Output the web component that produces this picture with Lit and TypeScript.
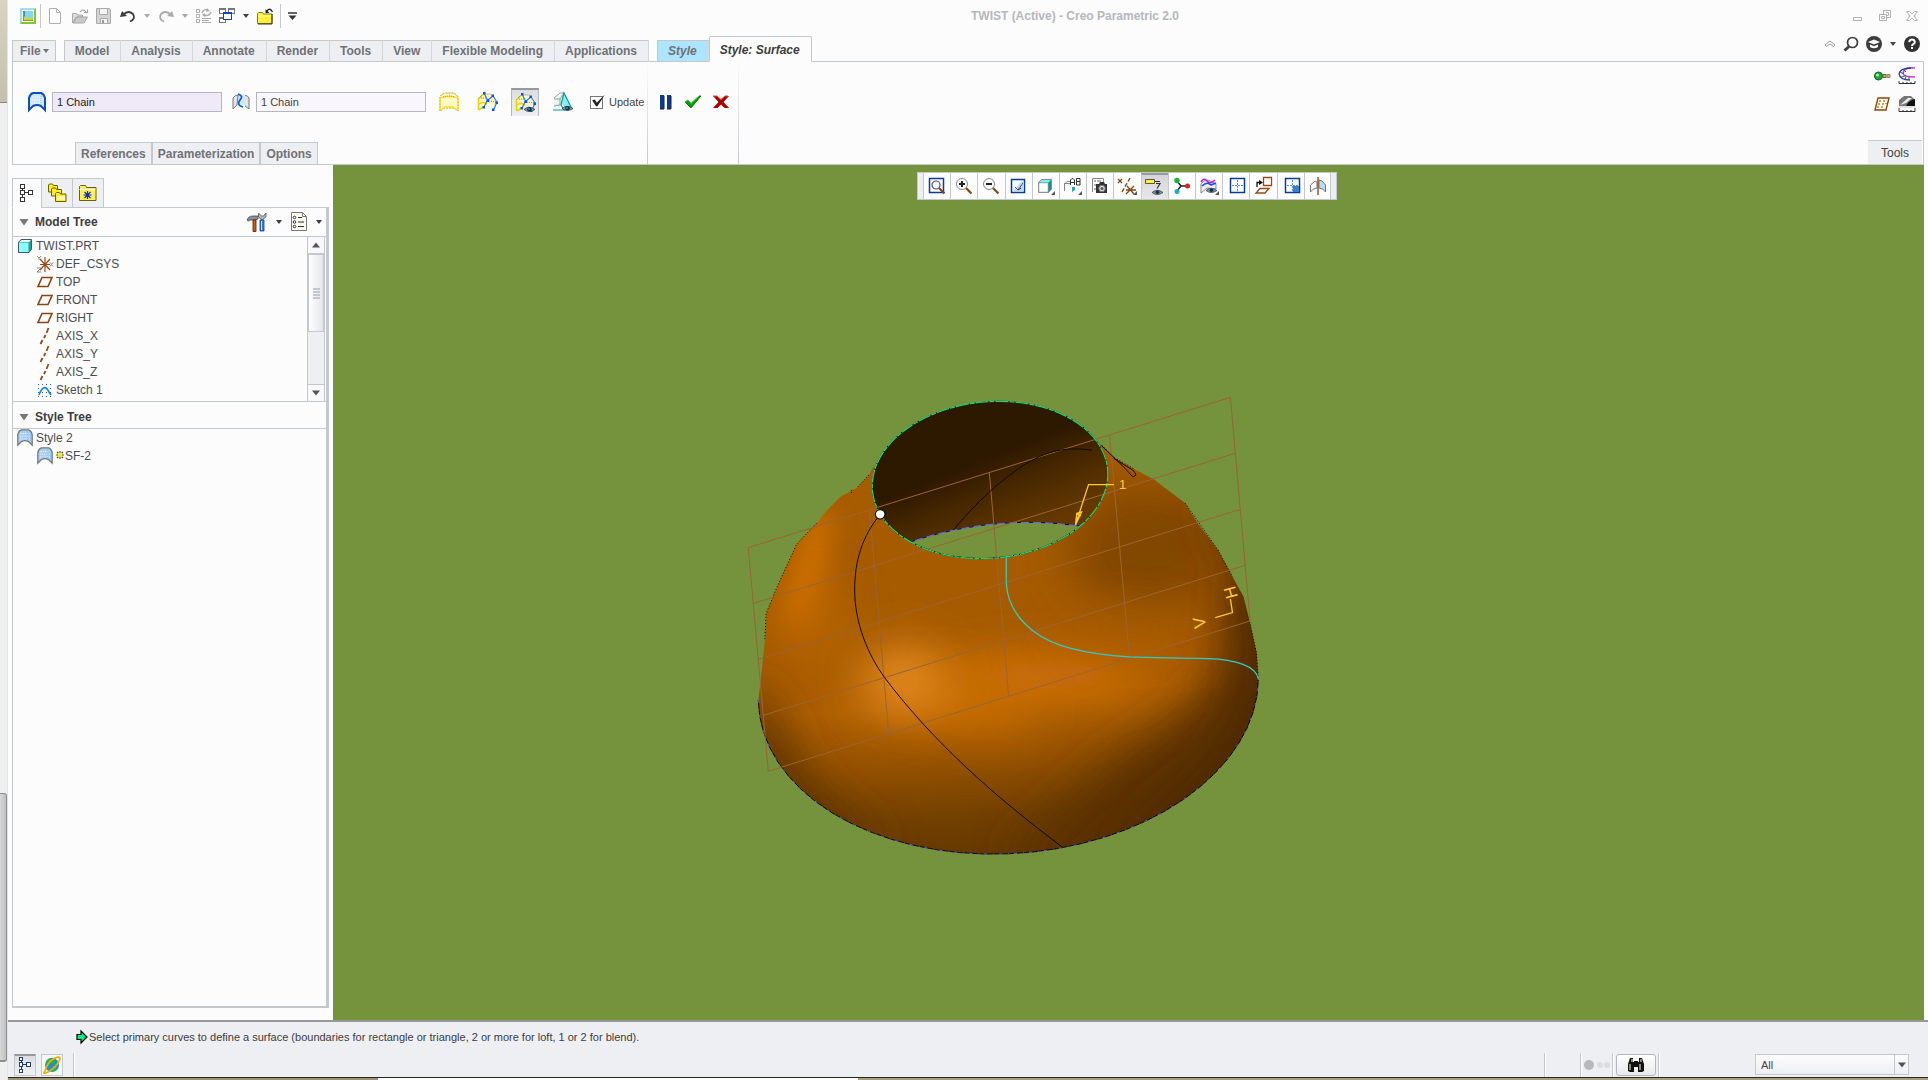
import { LitElement, html, svg, css, nothing, type SVGTemplateResult } from "lit";
import { customElement, property, state } from "lit/decorators.js";
import { classMap } from "lit/directives/class-map.js";

interface Glyph {
  w: number;
  h: number;
  art: SVGTemplateResult;
}

const surfaceArt = (line: string, fill: string) => svg`
  <path d="M2 18V6Q3 2 6 1H14Q17 2 18 6V18L14 14Q10 12 6 14Z" fill=${fill} stroke=${line} stroke-width="1.4"/>
  <path d="M5 5h10M4.500 8h11M4.500 11h11" stroke="#fff" stroke-dasharray="1 1.500" fill="none"/>
  <path d="M13 3v9M16 6v8" stroke="#7fb2e0" stroke-dasharray="1 1" fill="none"/>`;

const eyeArt = svg`
  <path d="M9 16.500Q14 12 20 16.500Q14 20.500 9 16.500Z" fill="#8a8f94" stroke="#444" stroke-width=".8"/>
  <circle cx="14.500" cy="16.300" r="2.200" fill="#036"/><circle cx="14" cy="16" r="1" fill="#1aa08a"/>`;

const meshArt = svg`
  <path d="M1 18V7L6 2H15L19 6V13L16 16L13 11L7 14Z" fill="#fbf6bd"/>
  <path d="M1.500 18V7L6 2.500M2 12Q6 9 10 12M2 18L6 15" stroke="#e6d800" stroke-width="1.600" fill="none"/>
  <path d="M1.500 6.500L6 2H14L18 6M4 6H9M12 9L19 10" stroke="#8a8440" stroke-dasharray="1 1" fill="none"/>
  <path d="M7.500 2L10.500 8L7 15M16 4L20 10L17 17M11 8L16 4" stroke="#2a70f0" stroke-width="1.100" fill="none"/>
  <path d="M6 0h2.500v2.500h-2.500zM9.500 7.500h2.500v2.500h-2.500zM5.500 14h2.500v2.500h-2.500zM14.500 2.500h2.500v2.500h-2.500zM18.500 9.500h2.500v2.500h-2.500zM15 16.500h2.500v2.500h-2.500z" fill="#0a50ff"/>`;

const treeArt = (line: string) => svg`
  <g fill="#fff" stroke=${line} shape-rendering="crispEdges">
    <path d="M3.500 5v10M3.500 9.500h6" fill="none"/>
    <rect x="1.500" y="1.500" width="4" height="4"/><rect x="1.500" y="7.500" width="4" height="4"/>
    <rect x="1.500" y="14.500" width="4" height="4"/><rect x="9.500" y="7.500" width="4" height="4"/>
  </g>`;

const icons: Record<string, Glyph> = {
  app: { w: 16, h: 16, art: svg`
    <rect width="16" height="16" rx="1" fill="#a8d8ee"/><path d="M16 0V16H0Z" fill="#7ec636"/>
    <path d="M2 2h12v12h-12z" fill="#fff"/><path d="M3 3h10v10h-10z" fill="#2a9aa8"/><path d="M4 3v9h9v1h-10v-10z" fill="#8a9a10"/>
    <path d="M5 3h8v7h-8z" fill="#8ad4e8"/><path d="M4 8l2 2h7v2h-9z" fill="#c6d83a"/>` },
  newFile: { w: 16, h: 16, art: svg`<path d="M1.500.5h7l4 4v11h-11zM8.500.5v4h4" fill="#fff" stroke="#b0b0b0"/>` },
  open: { w: 16, h: 16, art: svg`
    <path d="M.5 15V5.500h4l1 1.500h5v2h-6.500z" fill="#ddd" stroke="#aaa"/><path d="M1 15L5 9h10.500L12 15z" fill="#c9c9c9" stroke="#a5a5a5"/>
    <path d="M8 4Q11 0 14 4M12 4.500h3.500v-3" fill="none" stroke="#a0a0a0" stroke-width="1.200"/>` },
  save: { w: 16, h: 16, art: svg`
    <path d="M.5.5h13l1 1v14h-14z" fill="#d4d4d4" stroke="#aaa"/><path d="M3.500.5h8v6h-8zM4.500 10.500h7v5h-7z" fill="#f4f4f4" stroke="#aaa"/><path d="M6 12h2v3h-2z" fill="#999"/>` },
  undo: { w: 16, h: 16, art: svg`
    <path d="M3 7Q8 1.500 13 6Q16 11 10 13.500" fill="none" stroke="#3c3c3c" stroke-width="1.800"/><path d="M0 9L2 3L7 8Z" fill="#3c3c3c"/>` },
  redo: { w: 16, h: 16, art: svg`
    <path d="M13 7Q8 1.500 3 6Q0 11 6 13.500" fill="none" stroke="#aaa" stroke-width="1.800"/><path d="M16 9L14 3L9 8Z" fill="#aaa"/>` },
  regen: { w: 16, h: 16, art: svg`
    <g fill="none" stroke="#aaa"><path d="M.5 1.500h3v3h-3zM.5 6.500h3v3h-3zM.5 11.500h3v3h-3zM6 10.500h9M6 12.500h7M6 14.500h9"/>
    <path d="M6 5Q8 0 12 2.500M15 4Q13 9 8 7" stroke-width="1.400"/></g><path d="M11 0l3 3-4 1zM9 5v4l-3-2z" fill="#aaa"/>` },
  windows: { w: 16, h: 16, art: svg`
    <g shape-rendering="crispEdges" fill="#fff"><path d="M.5.5h6v5h-6zM9.500.5h6v5h-6zM.5 9.500h6v5h-6z" stroke="#777"/><path d="M0 0h7v2h-7zM9 0h7v2h-7zM0 9h4v2h-4z" fill="#777"/>
    <path d="M4.500 4.500h8v7h-8z" stroke="#0a48c0"/><path d="M4 4h9v2h-9z" fill="#0a48c0"/></g>` },
  folder: { w: 16, h: 16, art: svg`
    <path d="M.5 15.500v-10l1-1h4l1 1.500h8.500v9.500z" fill="#ffee3a" stroke="#8a8000"/><path d="M1 8h13.500" stroke="#fffbb0"/><path d="M15 6v10h-14" fill="none" stroke="#333"/>
    <path d="M10 3Q13-1 15.500 4" fill="none" stroke="#222" stroke-width="1.300"/><path d="M8.500 1v4h4z" fill="#222"/>` },
  caret: { w: 8, h: 6, art: svg`<path d="M1 1h6L4 5Z" fill="currentColor"/>` },
  custom: { w: 10, h: 9, art: svg`<path d="M0 1h9" stroke="#333" stroke-width="1.500"/><path d="M.5 3.500h8L4.500 8Z" fill="#333"/>` },
  minimize: { w: 12, h: 12, art: svg`<path d="M1.500 7.500h8v3h-8z" fill="none" stroke="#b0b0b0"/>` },
  restore: { w: 12, h: 12, art: svg`<path d="M.5 4.500h7v6h-7zM2.500 6.500h3v2h-3zM4.500 4v-3.500h7v7h-4M7 2.500h2.500v3h-2" fill="none" stroke="#b0b0b0"/>` },
  close: { w: 12, h: 12, art: svg`<path d="M.5 1.500h3L6 4l2.500-2.500h3L8 6l3.500 4.500h-3L6 8l-2.500 2.500h-3L4 6Z" fill="none" stroke="#b0b0b0"/>` },
  collapse: { w: 12, h: 8, art: svg`<path d="M1 5L6 1L11 5L9.500 6.500L6 4L2.500 6.500Z" fill="none" stroke="#999"/>` },
  search: { w: 16, h: 16, art: svg`<circle cx="9.500" cy="6.500" r="5" fill="#fff" stroke="#3c3c3c" stroke-width="1.700"/><path d="M6 10.500L1.500 14.500" stroke="#3c3c3c" stroke-width="2.800"/>` },
  learn: { w: 16, h: 16, art: svg`<circle cx="8" cy="8" r="8" fill="#3c3c3c"/><path d="M2 6L8 3.500L14 6L8 8.500Z" fill="#fff"/><path d="M4 8.500V11Q8 13.500 12 11V8.500L8 10.200Z" fill="#fff"/>` },
  help: { w: 16, h: 16, art: svg`<circle cx="8" cy="8" r="8" fill="#333"/><path d="M5.200 6.200Q5.500 3.500 8 3.500T10.800 6Q10.800 7.300 9.300 8.100Q8 8.800 8 10" fill="none" stroke="#fff" stroke-width="2"/><rect x="7" y="11" width="2" height="2" fill="#fff"/>` },
  primary: { w: 20, h: 20, art: svg`<path d="M2 18V6Q3 2 6 1H14Q17 2 18 6V18L14 14Q10 12 6 14Z" fill="#cfe6fb" stroke="#0a50b8" stroke-width="2"/><path d="M5 5h10M4.500 8h11M4.500 11h11" stroke="#fff" stroke-dasharray="1 1.500"/><path d="M14 4v9" stroke="#8fbce8" stroke-dasharray="1 1"/>` },
  surface: { w: 18, h: 18, art: svg`<g transform="scale(.9)">${surfaceArt("#777", "#a9d0f2")}</g>` },
  cross: { w: 20, h: 20, art: svg`
    <path d="M2 17V6Q4 3 8 3H14Q17 3 18 6V17L14 14Q10 11 6 13Z" fill="#cfe6fb"/><path d="M2 17V6Q4 3 7 3L6 13ZM14 3Q17 4 18 6V17L14 14" fill="#e4e4e4" stroke="#777"/>
    <path d="M7 2Q13 4 9 8Q5 13 12 15" fill="none" stroke="#0a60d8" stroke-width="1.800"/>` },
  dome: { w: 20, h: 20, art: svg`
    <path d="M1 19V5Q3 1 7 1H13Q17 1 19 5V19L15 16H5Z" fill="#fdfac8" stroke="#a8a000" stroke-dasharray="2 1"/><path d="M1 19V6Q10 3 19 6V19M2 18L6 15H14L18 18" fill="none" stroke="#f0e020" stroke-width="1.300"/><path d="M4 5Q10 3 16 5" stroke="#888" stroke-dasharray="1 1" fill="none"/>` },
  mesh: { w: 21, h: 20, art: meshArt },
  meshEye: { w: 21, h: 20, art: svg`${meshArt}${eyeArt}` },
  draft: { w: 20, h: 20, art: svg`
    <path d="M1 18V8L8 2H12L9 14Z" fill="#e4f6f0"/><path d="M11 1L19 17L13 18L9 12Z" fill="#8ceced"/><path d="M1 6L7 1H11L7 7H1M7 7V13L1 14" fill="none" stroke="#999"/>
    <path d="M0 18H11L8 13L11 1L19 17" fill="none" stroke="#00a0a0" stroke-width="1.200"/>${eyeArt}` },
  pause: { w: 14, h: 14, art: svg`<path d="M1 0h4v14h-4zM8 0h4v14h-4z" fill="#0a3c96"/><path d="M5 1v13h-4M12 1v13h-4" fill="none" stroke="#222"/>` },
  ok: { w: 18, h: 14, art: svg`<path d="M1 7L4 5L7 8.500L15 1H17L7 13Z" fill="#00a000" stroke="#055a05" stroke-width=".8"/><path d="M1 7L4 5L7 8.500L15 1" fill="none" stroke="#4ad84a"/>` },
  cancel: { w: 16, h: 14, art: svg`<path d="M0 1h4L8 4.500L12 1h4L10.500 7L16 13H11.500L8 9.500L4.500 13H0L5.500 7Z" fill="#a80000"/><path d="M0 1h4L8 4.500L12 1h3" fill="none" stroke="#e04a4a"/>` },
  probe: { w: 18, h: 18, art: svg`<circle cx="5.500" cy="9" r="4" fill="#18a838" stroke="#0a6020"/><circle cx="4.500" cy="8" r="1.500" fill="#b0f0b0"/><path d="M10 7.500h3v3h-3z" fill="#f0d800" stroke="#555"/><path d="M14 7.500h3v3h-3z" fill="#f09a9a" stroke="#886"/>` },
  curvature: { w: 18, h: 18, art: svg`
    <path d="M17 1Q6 0 5 6Q5 10 17 10" fill="none" stroke="#d838d8" stroke-width="1.600"/><path d="M13 1Q2 1 1 7Q2 13 12 13" fill="none" stroke="#1a3cc0" stroke-width="1.400"/>
    <path d="M2 5l4 2M5 2l3 3M3 10l4-1M7 13l1-4M11 13v-3" stroke="#555"/><path d="M1 14v2.500h16v-2.500M5 15v2M9 15v2M13 15v2" fill="none" stroke="#333"/>` },
  gridPlane: { w: 18, h: 18, art: svg`<path d="M5 3H16L13 15H2Z" fill="#fffbe0" stroke="#8a4513" stroke-width="1.400"/><path d="M7 5v2M11 5v2M6 8v2M10 8v2M13 8v1M5 11v2M9 11v2" stroke="#8a4513"/>` },
  shade: { w: 18, h: 18, art: svg`<path d="M1 11V5L6 1H13L17 5V11Z" fill="#777"/><path d="M2 10L10 3H14L8 8Z" fill="#eee"/><path d="M8 11Q11 5 17 4V11Z" fill="#111"/><path d="M1 12h16" stroke="#ccc"/><path d="M1 13v3.500h16v-3.500M5 15v2M9 15v2M13 15v2" fill="none" stroke="#333"/>` },
  tree: { w: 16, h: 20, art: treeArt("#333") },
  treeBlue: { w: 16, h: 20, art: svg`<g transform="translate(1 1) scale(.9)">${treeArt("#0a2a6a")}</g>` },
  folders: { w: 20, h: 20, art: svg`
    <g fill="#ffe92e" stroke="#6b6300"><path d="M1.500 9v-7l1-1h3l1 1.500h4v6.500z"/><path d="M4.500 13v-7l1-1h3l1 1.500h5v6.500z"/><path d="M8.500 18.500v-8l1-1h3l1 1.500h5.500v7.500z"/></g><path d="M10 13h8v4h-8z" fill="#fff9a8"/>` },
  favourites: { w: 20, h: 18, art: svg`
    <path d="M1.500 16.500v-14l1-1h5l1 2h9.500v13z" fill="#ffef58" stroke="#6b6300"/><path d="M1.500 5.500h16" stroke="#fff" /><path d="M9.500 7v8M5.500 11h8M6.500 8l6 6M12.500 8l-6 6" stroke="#0a30c0" stroke-width="1.200"/>` },
  tools: { w: 20, h: 20, art: svg`
    <path d="M0 8L1.500 5.500Q3 4 6 4H11V7L8 8H3L1.500 9Z" fill="#8a9096" stroke="#444" stroke-width=".8"/><path d="M6 8h3v11.500h-3z" fill="#c86010" stroke="#602000" stroke-width=".8"/><path d="M11.500 1v4l3.500 3 4-3V1L16.500 4H14.500Z" fill="#b4b8bc" stroke="#555" stroke-width=".8"/><path d="M13 8h4v11h-4z" fill="#3a80e0" stroke="#124080" stroke-width=".8"/><path d="M14.500 9v9" stroke="#b8dcff"/>` },
  settings: { w: 16, h: 20, art: svg`<path d="M.5.5h11l4 4v14h-15zM11.500.5v4h4" fill="#fffdf0" stroke="#777"/><path d="M7 5.500h4M7 10h6M7 14.500h6" stroke="#333"/><g fill="#fff" stroke="#333"><circle cx="3.500" cy="5.500" r="1.300"/><circle cx="3.500" cy="10" r="1.300"/><circle cx="3.500" cy="14.500" r="1.300"/></g>` },
  part: { w: 14, h: 14, art: svg`<path d="M.5 3.500L3 .5H13.500V10L11 13.500H.5Z" fill="#2f9a9a" stroke="#456"/><path d="M1 3.500h9.500v9.500h-9.500z" fill="#8ff"/><path d="M1.500 3L3.500 1H13L11 3Z" fill="#e8ffff"/>` },
  csys: { w: 16, h: 16, art: svg`<path d="M8 1v15M3 3l10 11M3 14L13 3M3 8.500h10" stroke="#9a4a14" stroke-width="1.200"/><path d="M0 0l2 2 2-2M2 2v2M13 6.500l3 4M16 6.500l-3 4M0 12h4l-4 4h4" stroke="#888" fill="none"/>` },
  plane: { w: 16, h: 12, art: svg`<path d="M5 1.500H15L11 10.500H1Z" fill="none" stroke="#8a4513" stroke-width="1.600"/>` },
  axis: { w: 16, h: 16, art: svg`<path d="M11.500 0L9.500 5M8.500 7L7 10M5.500 12L3.500 16" stroke="#9a4a14" stroke-width="1.800"/>` },
  sketch: { w: 16, h: 14, art: svg`<path d="M1.500 1v13M5.500 1v13M9.500 1v13M13.500 1v13" stroke="#2a50a0" stroke-dasharray="1 3"/><path d="M2 12Q7-1 12 9L14 12" fill="none" stroke="#0a80f8" stroke-width="1.600"/>` },
  spark: { w: 9, h: 10, art: svg`<path d="M4 0v8M0 4h8M1 1l6 6M7 1L1 7" stroke="#444" stroke-width="1.100"/><path d="M2 2h4v4h-4z" fill="#fe0"/>` },
  twisty: { w: 10, h: 8, art: svg`<path d="M.5 1h9L5 7.500Z" fill="#777"/>` },
  refit: { w: 18, h: 18, art: svg`<path d="M1.500 1.500h14v14h-14z" fill="#fff" stroke="#0a3c96" stroke-width="1.500"/><circle cx="8" cy="8" r="4" fill="#eef6fa" stroke="#555" stroke-width="1.200"/><path d="M11 11l5.500 5.500" stroke="#8a4513" stroke-width="2.200"/>` },
  zoomIn: { w: 18, h: 18, art: svg`<circle cx="7" cy="7" r="5.500" fill="#fff" stroke="#888"/><path d="M4 7h6M7 4v6" stroke="#222" stroke-width="2"/><path d="M11 11l5.500 5.500" stroke="#8a4513" stroke-width="2.200"/>` },
  zoomOut: { w: 18, h: 18, art: svg`<circle cx="7" cy="7" r="5.500" fill="#fff" stroke="#888"/><path d="M4 7h6" stroke="#222" stroke-width="2"/><path d="M11 11l5.500 5.500" stroke="#8a4513" stroke-width="2.200"/>` },
  repaint: { w: 18, h: 18, art: svg`<path d="M1.500 2.500h13v13h-13z" fill="#f4faff" stroke="#0a3c96" stroke-width="1.500"/><path d="M3 14L12 4L14 6V14Z" fill="#b8d8f4"/><path d="M5 10l3 3 5-7" fill="none" stroke="#555"/><path d="M8 13l3-2" stroke="#222"/>` },
  shading: { w: 18, h: 18, art: svg`<path d="M1.500 5.500L4.500 2.500H14.500V12L11.500 15.500H1.500Z" fill="#1f8f8f" stroke="#888"/><path d="M2 6h9v9h-9z" fill="#fff" stroke="#aaa" stroke-width=".6"/><path d="M2 5.500L4.500 3H14L11.500 5.500Z" fill="#7ff4f4"/><path d="M18 18h-4l4-4z" fill="#555"/>` },
  views: { w: 18, h: 18, art: svg`<path d="M.5 14V7L3 4.500H6M0 6.500h6" fill="none" stroke="#888"/><path d="M8 10h3v3l-3 2z" fill="#2aa"/><path d="M6.500 8V3L8 1.500h1L10.500 3V8M6.500 5.500h4M12.500 8V1.500h3.500v6.500zM12.500 4.500h3.500" fill="none" stroke="#333"/><path d="M18 18h-4l4-4z" fill="#555"/>` },
  camera: { w: 18, h: 18, art: svg`<path d="M1.500 15V1.500h11V5" fill="#fff" stroke="#888"/><path d="M3 4h2M3 8h2M3 12h2M6 4h4" stroke="#666"/><path d="M5 7h3l1-2h4l1 2h2v9h-11z" fill="#333"/><circle cx="11" cy="11.500" r="3.200" fill="#ddd" stroke="#777"/><circle cx="11" cy="11.500" r="1.500" fill="#555"/>` },
  datums: { w: 20, h: 18, art: svg`<path d="M1 2l4 4M5 2L1 6M9 13h10M10 9l7 8M17 9l-8 8" fill="none" stroke="#8a4513" stroke-width="1.300"/><path d="M13 1L5 15" stroke="#8a4513" stroke-width="1.400" stroke-dasharray="4 2"/><path d="M20 18h-4l4-4z" fill="#555"/>` },
  notes: { w: 20, h: 18, art: svg`<path d="M.5 1.500h9v4h-9z" fill="#fff62a" stroke="#555"/><path d="M10 3.500h5M11 5.500h4l-3 5" stroke="#333" fill="none" stroke-width="1.200"/><path d="M7 14.500Q12 10 18 14.500Q12 18.500 7 14.500Z" fill="#8a8f94" stroke="#444" stroke-width=".8"/><circle cx="12.500" cy="14.300" r="1.800" fill="#036"/>` },
  spin: { w: 18, h: 18, art: svg`<path d="M4 4L8 9L4 14M8 9h6" fill="none" stroke="#222" stroke-width="1.500"/><circle cx="4" cy="3.500" r="2.700" fill="#14b838"/><circle cx="14.500" cy="9" r="2.500" fill="#e02020"/><circle cx="4" cy="14.500" r="2.500" fill="#20b0b8"/>` },
  styleDisplay: { w: 20, h: 18, art: svg`<path d="M2 16V7Q4 3 9 3L17 7V12L8 11Z" fill="#eee" stroke="#888"/><path d="M2 5Q5 0 8 4T16 3" fill="none" stroke="#c020e0" stroke-width="1.600"/><path d="M3 9Q8 4 12 8L17 6" fill="none" stroke="#1550e8" stroke-width="1.500"/><path d="M7 13.500Q12 9 18 13.500Q12 17.500 7 13.500Z" fill="#8a8f94" stroke="#444" stroke-width=".8"/><circle cx="12.500" cy="13.300" r="1.800" fill="#036"/><path d="M20 18h-4l4-4z" fill="#555"/>` },
  oneView: { w: 18, h: 18, art: svg`<path d="M3.500 1.500h14v14h-14z" fill="#fff" stroke="#0a3c96" stroke-width="1.500"/><path d="M10.500 3v11M5 8.500h11" stroke="#4a90e0" stroke-dasharray="2 1"/>` },
  setPlane: { w: 18, h: 18, art: svg`<path d="M9.500.5h8v8h-8z" fill="#fff" stroke="#9a4a14" stroke-width="1.300"/><path d="M6 11.500h9l-4 4.500h-9z" fill="#fff" stroke="#9a4a14" stroke-width="1.300"/><path d="M3 10V5.500h3" fill="none" stroke="#111" stroke-width="1.300"/><path d="M5 3l4 2.500L5 8z" fill="#111"/>` },
  fourView: { w: 18, h: 18, art: svg`<path d="M3.500 1.500h14v14h-14z" fill="#fff" stroke="#0a3c96" stroke-width="1.500"/><path d="M11 9h6v6h-6z" fill="#3a80d0"/><path d="M10.500 3v11M5 8.500h11" stroke="#4a90e0" stroke-dasharray="2 1"/>` },
  mirror: { w: 18, h: 18, art: svg`<path d="M2.500 15V8L7 4L9 5V11Q5 11 2.500 15Z" fill="#fff" stroke="#777"/><path d="M17.500 15V8L14 4L11 3V11Q15 11 17.500 15Z" fill="#b8dcf4" stroke="#777"/><path d="M10 0v18" stroke="#9a4a14" stroke-width="1.400"/>` },
  prompt: { w: 12, h: 14, art: svg`<path d="M1 4.500h4V1L11 7L5 13V9.500H1Z" fill="#0e8" stroke="#000" stroke-width="1.200"/>` },
  browser: { w: 18, h: 18, art: svg`<circle cx="9" cy="9" r="7" fill="#1d8fd8"/><path d="M4 4Q8 0 13 3L11 8L7 7L5 11L3 9ZM10 10L15 8L13 14L9 16Z" fill="#2bb24a"/><path d="M2 15Q-1 19 5 16Q14 11 17 3Q17 0 12 2Q4 6 2 15Z" fill="none" stroke="#f0b000" stroke-width="1.800"/>` },
  binoculars: { w: 16, h: 16, art: svg`<path d="M0 14V7L2 1H5V5H6V4H10V5H11V1H14L16 7V14L14 15H10V10H6V15H2Z" fill="#111"/><path d="M2 7v6M4 2v3M12 7v6M13 2v3" stroke="#d8d8b8" stroke-width="1.200"/>` },
  lights: { w: 26, h: 12, art: svg`<circle cx="5" cy="6" r="5" fill="#b8b9bb"/><circle cx="16" cy="6" r="3" fill="#dcdde0"/><circle cx="23" cy="6" r="3" fill="#dcdde0"/>` },
  up: { w: 8, h: 6, art: svg`<path d="M0 5.500h8L4 .5Z" fill="#555"/>` },
  down: { w: 8, h: 6, art: svg`<path d="M0 .5h8L4 5.500Z" fill="#555"/>` },
};

const icon = (name: string) => {
  const g = icons[name];
  return html`<svg class="ico" width=${g.w} height=${g.h} viewBox="0 0 ${g.w} ${g.h}" aria-hidden="true">${g.art}</svg>`;
};

const shared = css`
  * { box-sizing: border-box; }
  button, input, select { font: inherit; color: inherit; margin: 0; }
  button { display: inline-flex; align-items: center; justify-content: center; padding: 0; border: 0; background: none; flex: none; }
  .ico { display: block; flex: none; overflow: visible; }
`;

@customElement("title-bar")
class TitleBar extends LitElement {
  static styles = [shared, css`
    :host { display: flex; align-items: center; height: 32px; padding: 0 10px 0 12px; }
    .group { display: flex; align-items: center; gap: 7px; }
    .files { gap: 8px; }
    .sep { width: 1px; height: 24px; background: #c8c8c8; }
    .app { gap: 4px; }
    .dim { color: #aaa; }
    .caret { color: #444; }
    .caption { flex: 1; text-align: center; font-weight: bold; color: #b4b8bc; white-space: nowrap; }
    .window { justify-content: flex-end; gap: 15px; }
  `];
  private btn(name: string, label: string, cls = "") {
    return html`<button class=${cls} aria-label=${label}>${icon(name)}</button>`;
  }
  render() {
    return html`
      <div class="group">
        <div class="group app">${this.btn("app", "Application")}<span class="sep"></span></div>
        <div class="group files">${this.btn("newFile", "New")}${this.btn("open", "Open")}${this.btn("save", "Save")}${this.btn("undo", "Undo")}</div>
        ${this.btn("caret", "Undo list", "dim")}${this.btn("redo", "Redo")}${this.btn("caret", "Redo list", "dim")}
        ${this.btn("regen", "Regenerate")}${this.btn("windows", "Windows")}${this.btn("caret", "Window list", "caret")}
        <div class="group">${this.btn("folder", "Close")}<span class="sep"></span>${this.btn("custom", "Customize toolbar")}</div>
      </div>
      <span class="caption">TWIST (Active) - Creo Parametric 2.0</span>
      <div class="group window">${this.btn("minimize", "Minimize")}${this.btn("restore", "Restore")}${this.btn("close", "Close window")}</div>`;
  }
}

@customElement("ribbon-bar")
class RibbonBar extends LitElement {
  @state() private live = true;
  static styles = [shared, css`
    :host { display: block; padding: 0 4px; }
    .tabs { display: flex; align-items: flex-end; height: 29px; font-weight: bold; color: #6f7276; }
    .set { display: flex; margin-bottom: -1px; }
    .tab { height: 22px; padding: 0 11px 0 10px; border-top: 1px solid #c3c8cd; border-right: 1px solid #d4d8dc; background: #eeeff2; border-bottom: 1px solid #c3c8cd; white-space: nowrap; }
    .file { padding: 0 5px 0 7px; gap: 1px; border: 1px solid #c3c8cd; margin: 0 8px -1px 0; }
    .set { border-left: 1px solid #c3c8cd; margin-right: 8px; }
    .style { margin-bottom: -1px; background: #ade4ff; font-style: italic; border-left: 1px solid #c3c8cd; }
    .active { height: 26px; padding-top: 2px; margin-bottom: -1px; background: #fcfcfc; color: #3c3c40; font-style: italic; border: 1px solid #c3c8cd; border-bottom-color: #fcfcfc; border-radius: 2px 2px 0 0; position: relative; }
    .spring { flex: 1; }
    .help { display: flex; align-items: center; gap: 7px; align-self: flex-start; height: 24px; padding-right: 4px; color: #444; }
    .body { display: flex; height: 104px; border: 1px solid #c3c8cd; }
    .dash { display: flex; flex-direction: column; justify-content: space-between; flex: none; width: 634px; padding-top: 26px; }
    .row { display: flex; align-items: center; height: 28px; }
    .slot { display: flex; align-items: center; gap: 5px; margin-left: 14px; }
    .slot + .slot { margin-left: 9px; }
    .field { width: 170px; height: 20px; padding: 0 4px; border: 1px solid #b4b8bc; background: #f9f7fd; font-size: 11px; color: #444; border-radius: 0; }
    .picked { background: #f0eaf8; color: #222; }
    .surf { width: 28px; height: 28px; }
    .surfs { display: flex; gap: 10px; margin-left: 9px; }
    .on { background: linear-gradient(#dcdde0, #f0f0f2); border: 1px solid #b4b8bc; border-top: 2px solid #96999c; border-bottom: 0; }
    .update { display: flex; align-items: center; gap: 6px; margin-left: 13px; font-size: 11px; color: #444; }
    .box { appearance: none; width: 13px; height: 13px; border: 1px solid #777; background: #fff; }
    .box:checked::before { content: ""; display: block; width: 14px; height: 12px; margin-top: -2px; background: #222; clip-path: polygon(8% 50%, 26% 42%, 42% 66%, 100% 0, 46% 98%, 36% 98%); }
    .panels { display: flex; margin-left: 62px; font-weight: bold; color: #6f7276; }
    .panel { height: 22px; padding: 0 5px; border: 1px solid #c3c8cd; border-bottom: 0; background: #eeeff2; }
    .confirm { display: flex; gap: 11px; padding: 26px 8px 0 11px; width: 92px; border: solid; border-width: 0 1px; border-image: linear-gradient(#fcfcfc, #c3c8cd) 1; }
    .confirm button { height: 28px; }
    .extras { display: flex; flex-direction: column; justify-content: space-between; margin-left: auto; width: 55px; padding: 5px 1px 0 0; }
    .grid { display: grid; grid-template-columns: 18px 18px; gap: 10px 7px; justify-content: end; padding-right: 6px; }
    .tools { height: 24px; border-top: 1px solid #c3c8cd; background: #eeeff2; color: #444; }
  `];
  render() {
    const tabs = ["Model", "Analysis", "Annotate", "Render", "Tools", "View", "Flexible Modeling", "Applications"];
    const modes = [["dome", "Loft"], ["mesh", "Mesh"], ["meshEye", "Show mesh"], ["draft", "Draft"]];
    return html`
      <nav class="tabs">
        <button class="tab file">File ${icon("caret")}</button>
        <div class="set">${tabs.map(t => html`<button class="tab">${t}</button>`)}</div>
        <button class="tab style">Style</button>
        <button class="tab active">Style: Surface</button>
        <span class="spring"></span>
        <div class="help">
          <button aria-label="Minimize ribbon">${icon("collapse")}</button>
          <button aria-label="Search">${icon("search")}</button>
          <button aria-label="Learning">${icon("learn")}</button>
          <button aria-label="Learning list">${icon("caret")}</button>
          <button aria-label="Help">${icon("help")}</button>
        </div>
      </nav>
      <div class="body">
        <div class="dash">
          <div class="row">
            <label class="slot">${icon("primary")}<input class="field picked" aria-label="Primary chains" .value=${"1 Chain"}></label>
            <label class="slot">${icon("cross")}<input class="field" aria-label="Internal chains" .value=${"1 Chain"}></label>
            <div class="surfs">${modes.map(([n, l]) => html`<button class=${classMap({ surf: true, on: n === "meshEye" })} aria-label=${l}>${icon(n)}</button>`)}</div>
            <label class="update"><input class="box" type="checkbox" .checked=${this.live}
              @change=${(e: Event) => { this.live = (e.target as HTMLInputElement).checked; }}>Update</label>
          </div>
          <div class="panels">${["References", "Parameterization", "Options"].map(p => html`<button class="panel">${p}</button>`)}</div>
        </div>
        <div class="confirm">
          <button aria-label="Pause">${icon("pause")}</button><button aria-label="Accept">${icon("ok")}</button><button aria-label="Cancel">${icon("cancel")}</button>
        </div>
        <div class="extras">
          <div class="grid">
            <button aria-label="Probe">${icon("probe")}</button><button aria-label="Curvature">${icon("curvature")}</button>
            <button aria-label="Grid">${icon("gridPlane")}</button><button aria-label="Shaded curvature">${icon("shade")}</button>
          </div>
          <button class="tools">Tools</button>
        </div>
      </div>`;
  }
}

interface Item { icon: string; text: string; depth: number; mark?: boolean; }

@customElement("tree-row")
class TreeRow extends LitElement {
  @property({ attribute: false }) item!: Item;
  static styles = [shared, css`
    :host { display: block; }
    .row { display: flex; align-items: center; height: 18px; padding-left: 4px; color: #4a4c50; }
    .deep { padding-left: 24px; }
    .cell { display: flex; justify-content: center; width: 16px; margin-right: 3px; }
  `];
  render() {
    const { icon: name, text, depth, mark } = this.item;
    return html`<div class=${classMap({ row: true, deep: depth > 0 })}><span class="cell">${icon(name)}</span>${mark ? icon("spark") : nothing}<span>${text}</span></div>`;
  }
}

@customElement("side-panel")
class SidePanel extends LitElement {
  static styles = [shared, css`
    :host { display: flex; flex-direction: column; padding: 13px 4px 12px; }
    .tabs { display: flex; }
    .tab { width: 31px; height: 30px; border: 1px solid #c3c8cd; border-left-width: 0; background: #eeeff2; }
    .tab:first-child { width: 30px; border-left-width: 1px; background: #fcfcfc; border-bottom-color: #fcfcfc; position: relative; }
    .frame { flex: 1; margin-top: -1px; border: 1px solid #c3c8cd; border-right-width: 3px; border-bottom-width: 2px; }
    .head { display: flex; align-items: center; height: 29px; padding: 0 3px 0 6px; gap: 6px; border-bottom: 1px solid #c3c8cd; font-weight: bold; color: #3c3c40; }
    .short { height: 27px; padding-top: 4px; }
    .acts { display: flex; align-items: center; gap: 8px; margin-left: auto; }
    .head h2 { margin: 0; font-size: inherit; }
    .list { display: flex; justify-content: space-between; height: 165px; border-bottom: 1px solid #c3c8cd; }
    .bar { display: flex; flex-direction: column; width: 18px; margin-right: 1px; border: solid #c3c8cd; border-width: 0 1px; background: #eeeff2; }
    .arrow { height: 17px; background: #f8f8fa; border-bottom: 1px solid #c3c8cd; }
    .thumb { display: flex; flex-direction: column; align-items: center; justify-content: center; gap: 1px; height: 78px; border: 1px solid #c3c8cd; background: linear-gradient(90deg, #fff, #e4e5e8); }
    .grip { width: 7px; height: 2px; background: #c3c8cd; }
    .rest { flex: 1; }
    .last { border-top: 1px solid #c3c8cd; border-bottom: 0; }
  `];
  render() {
    const model: Item[] = [
      { icon: "part", text: "TWIST.PRT", depth: 0 }, { icon: "csys", text: "DEF_CSYS", depth: 1 },
      ...["TOP", "FRONT", "RIGHT"].map(text => ({ icon: "plane", text, depth: 1 })),
      ...["AXIS_X", "AXIS_Y", "AXIS_Z"].map(text => ({ icon: "axis", text, depth: 1 })),
      { icon: "sketch", text: "Sketch 1", depth: 1 },
    ];
    const style: Item[] = [{ icon: "surface", text: "Style 2", depth: 0 }, { icon: "surface", text: "SF-2", depth: 1, mark: true }];
    const row = (i: Item) => html`<tree-row .item=${i}></tree-row>`;
    return html`
      <div class="tabs">
        <button class="tab" aria-label="Model tree tab">${icon("tree")}</button>
        <button class="tab" aria-label="Folder browser">${icon("folders")}</button>
        <button class="tab" aria-label="Favourites">${icon("favourites")}</button>
      </div>
      <div class="frame">
        <div class="head">${icon("twisty")}<h2>Model Tree</h2>
          <div class="acts">
            <button aria-label="Tree tools">${icon("tools")}</button><button aria-label="Tree tools list">${icon("caret")}</button>
            <button aria-label="Tree settings">${icon("settings")}</button><button aria-label="Tree settings list">${icon("caret")}</button>
          </div>
        </div>
        <div class="list">
          <div>${model.map(row)}</div>
          <div class="bar">
            <button class="arrow" aria-label="Scroll up">${icon("up")}</button>
            <div class="thumb"><span class="grip"></span><span class="grip"></span><span class="grip"></span><span class="grip"></span></div>
            <div class="rest"></div>
            <button class="arrow last" aria-label="Scroll down">${icon("down")}</button>
          </div>
        </div>
        <div class="head short">${icon("twisty")}<h2>Style Tree</h2></div>
        <div>${style.map(row)}</div>
      </div>`;
  }
}

const outline = `M386 262L374 285L343 320L291 350L250 393L222 430L190 465L165 492L130 568L108 620L76 700L72 780L65 850L59 910L53 960
  A727.200 495.300 -4.440 0 0 1505 900L1500 820L1480 725L1462 650L1430 590L1388 510L1328 428L1293 370L1200 297L1145 267L1085 232L1050 195L1033 180Z`;

@customElement("model-view")
class ModelView extends LitElement {
  static styles = [shared, css`
    :host { display: block; position: relative; background: #75923c; min-height: 600px; }
    .scene { position: absolute; inset: 0; width: 100%; height: 100%; }
    .line { fill: none; vector-effect: non-scaling-stroke; stroke-width: 1; }
    .grid { stroke: #9c6432; }
    .gold { stroke: #ffc832; stroke-width: 1.3; }
    .black { stroke: #100a04; }
    .blue { stroke: #6068ff; }
    .mint { stroke: #22d272; stroke-width: 1.3; }
    .cyan { stroke: #30ccc8; stroke-width: 1.3; }
    .label { fill: #ffc832; font: 40px "Liberation Sans", sans-serif; }
    .axis { font-size: 50px; }
    .bar { position: absolute; top: 7px; left: 584px; display: grid; grid-template-columns: 5px repeat(15, 1fr) 5px; width: 420px; height: 28px; border: 1px solid #c3c8cd; background: #eeeff2; }
    .tool { background: #fcfcfc; border: solid #c3c8cd; border-width: 0 0 0 1px; }
    .tool:nth-child(16) { border-right-width: 1px; }
    .on { background: linear-gradient(#d4d5d8, #e8e8ea); border-top: 2px solid #96999c; }
  `];
  render() {
    const tools = ["refit", "zoomIn", "zoomOut", "repaint", "shading", "views", "camera", "datums", "notes", "spin", "styleDisplay", "oneView", "setPlane", "fourView", "mirror"];
    return html`
      <svg class="scene" viewBox="333 165 1591 855" role="img" aria-label="Twisted surface model">
        <defs>
          <clipPath id="body"><path d=${outline}/></clipPath>
          <filter id="soft" x="-150%" y="-150%" width="400%" height="400%"><feGaussianBlur stdDeviation="36"/></filter>
          <filter id="softer" x="-150%" y="-150%" width="400%" height="400%"><feGaussianBlur stdDeviation="68"/></filter>
          <linearGradient id="skin" gradientUnits="userSpaceOnUse" x1="640" y1="200" x2="740" y2="1430">
            <stop offset="0" stop-color="#a85c00"/><stop offset=".45" stop-color="#a65b00"/><stop offset=".62" stop-color="#b06002"/><stop offset=".75" stop-color="#985300"/><stop offset=".9" stop-color="#724000"/><stop offset="1" stop-color="#643800"/>
          </linearGradient>
          <linearGradient id="inside" gradientUnits="userSpaceOnUse" x1="660" y1="80" x2="780" y2="470">
            <stop offset="0" stop-color="#2d1800"/><stop offset=".4" stop-color="#2d1800"/><stop offset=".65" stop-color="#462700"/><stop offset="1" stop-color="#643800"/>
          </linearGradient>
        </defs>
        <g transform="translate(740 380) scale(.3444 .3333)">
          <g clip-path="url(#body)">
            <path d=${outline} fill="url(#skin)"/>
            <ellipse cx="1180" cy="500" rx="230" ry="190" fill="#824600" filter="url(#softer)"/>
            <path d="M1340 350L1440 560L1400 850Q1330 1000 1120 1110Q960 1250 780 1420L1000 1700L1800 1500V350Z" fill="#5c3200" filter="url(#softer)"/>
            <path d="M1600 500V1600H1000Q1120 1340 1280 1220Q1440 1090 1470 900L1450 600Z" fill="#482700" filter="url(#softer)" opacity=".8"/>
            <path d="M0 900Q110 940 140 1100Q260 1300 440 1390L0 1500Z" fill="#5c3200" filter="url(#softer)"/>
            <ellipse cx="880" cy="890" rx="300" ry="55" fill="#d87508" filter="url(#softer)" transform="rotate(-2 880 890)"/>
            <ellipse cx="620" cy="960" rx="240" ry="80" fill="#c86d04" filter="url(#softer)" transform="rotate(10 620 960)"/>
            <ellipse cx="200" cy="560" rx="50" ry="180" fill="#d67400" filter="url(#soft)" transform="rotate(14 200 560)" opacity=".8"/>
            <ellipse cx="200" cy="720" rx="110" ry="120" fill="#c86d00" filter="url(#softer)" opacity=".6"/>
            <ellipse cx="475" cy="900" rx="120" ry="100" fill="#e48a20" filter="url(#softer)"/>
            <ellipse cx="1120" cy="750" rx="190" ry="50" fill="#a85c00" filter="url(#softer)" opacity=".8"/>
          </g>
          <ellipse cx="726" cy="300" rx="342.900" ry="234.700" transform="rotate(-5.660 726 300)" fill="url(#inside)"/>
          <path d="M497 485Q740 402 985 438A342.900 234.700 -5.660 0 1 497 485Z" fill="#75923c"/>
          <path class="line blue" d="M497 485Q740 402 985 438"/>
          <path class="line black" stroke-dasharray="4 8" d="M497 485Q740 402 985 438"/>
          <path class="line black" stroke-dasharray="1 2" d="M374 285L343 320M322 330l5 3-4 6M222 430L165 492L108 620L76 700L72 780M1050 195L1085 232L1145 267M1293 370L1388 510L1430 590M1480 725L1500 820L1505 900"/>
          <path class="line black" d="M53 960A727.200 495.300 -4.440 0 0 1505 900"/>
          <path class="line blue" stroke-dasharray="3 6 1 5" d="M53 960A727.200 495.300 -4.440 0 0 1505 900"/>
          <path class="line grid" d="M24 503L1424 52L1481 723L82 1174ZM376 390L432 1062M724 278L780 948M1073 166L1131 833M39 670L1438 220M54 838L1453 388M68 1006L1467 556"/>
          <path class="line black" d="M407 403C355 470 333 540 333 630C333 730 372 825 420 893C560 1085 740 1250 938 1403M620 450C700 350 780 280 850 240C900 210 960 200 1022 211M1050 197L1118 265L1140 290Q1158 288 1140 270L1085 235"/>
          <path class="line cyan" d="M773 530V605C775 670 805 715 850 752C910 800 1000 822 1130 831C1200 834 1280 833 1360 836C1440 838 1500 860 1505 897"/>
          <ellipse class="line black" cx="726" cy="300" rx="342.900" ry="234.700" transform="rotate(-5.660 726 300)"/>
          <ellipse class="line mint" stroke-dasharray="13 1 5 1" cx="726" cy="300" rx="342.900" ry="234.700" transform="rotate(-5.660 726 300)"/>
          <path class="line gold" d="M1086 314H1012L974 435M974 435L978 400L992 396L974 435M979 402L990 408M984 396L986 410M1380 713L1430 698L1424 657"/>
          <text class="label" x="1100" y="328">1</text>
          <text class="label axis" transform="translate(1446 650) rotate(-105)">H</text>
          <text class="label axis" transform="translate(1354 742) rotate(-100)">V</text>
          <circle cx="407" cy="403" r="14" fill="#fff" stroke="#000" stroke-width="3"/>
        </g>
      </svg>
      <div class="bar" role="toolbar">
        <span></span>${tools.map(t => html`<button class=${classMap({ tool: true, on: t === "notes" })} aria-label=${t}>${icon(t)}</button>`)}
      </div>`;
  }
}

@customElement("status-bar")
class StatusBar extends LitElement {
  static styles = [shared, css`
    :host { display: block; border-top: 2px solid #989898; background: #eeeff2; }
    .message { display: flex; align-items: center; gap: 1px; height: 30px; padding-left: 68px; font-size: 11px; color: #3c3c40; }
    .row { display: flex; align-items: center; height: 25px; padding: 0 19px 0 6px; gap: 5px; }
    .btn { width: 22px; height: 22px; border: 1px solid #c3c8cd; background: #f6f6f8; }
    .on { background: linear-gradient(#dcdde0, #f0f0f2); border-top: 2px solid #96999c; }
    .sep { width: 2px; height: 24px; border-left: 1px solid #c3c8cd; background: #fff; }
    .pad { margin-left: 5px; }
    .right { display: flex; align-items: center; gap: 2px; margin-left: auto; }
    .wide { margin-right: 32px; }
    .find { width: 40px; height: 22px; border: 1px solid #b4b8bc; border-radius: 3px; background: linear-gradient(#fff, #e8e9ec); }
    .filter { position: relative; display: flex; margin-left: 93px; }
    .select { appearance: none; width: 154px; height: 21px; padding: 0 5px; border: 1px solid #c3c8cd; border-radius: 0; background: linear-gradient(#fcfcfc, #eeeff2); font-size: 11px; color: #444; }
    .drop { position: absolute; right: 0; top: 0; display: flex; align-items: center; justify-content: center; width: 15px; height: 100%; border: 1px solid #c3c8cd; pointer-events: none; }
    .edge { height: 3px; border-top: 1px solid #2b2718; background: linear-gradient(90deg, #9a9478 370px, #fff 370px 850px, #a5a080 850px); }
  `];
  render() {
    return html`
      <div class="message">${icon("prompt")}<span>Select primary curves to define a surface (boundaries for rectangle or triangle, 2 or more for loft, 1 or 2 for blend).</span></div>
      <div class="row">
        <button class="btn on" aria-label="Model tree">${icon("treeBlue")}</button><button class="btn" aria-label="Browser">${icon("browser")}</button><span class="sep pad"></span>
        <div class="right">
          <span class="sep wide"></span><span class="sep"></span>${icon("lights")}<span class="sep"></span>
          <button class="find" aria-label="Find">${icon("binoculars")}</button><span class="sep"></span>
          <div class="filter"><select class="select" aria-label="Selection filter"><option>All</option></select><span class="drop">${icon("down")}</span></div>
        </div>
      </div>
      <div class="edge"></div>`;
  }
}

@customElement("app-root")
class AppRoot extends LitElement {
  static styles = [shared, css`
    :host { display: grid; grid-template-columns: 8px minmax(0, 1fr); min-height: 100vh; font: 12px/16px "Liberation Sans", Arial, sans-serif; background: #fcfcfc; overflow: hidden; }
    .behind { display: flex; flex-direction: column; background: #f0f0f0; border-right: 1px solid #e4e4e4; }
    .sand { height: 103px; background: linear-gradient(#d8d4c4, #c4c0ae); border-bottom: 1px solid #88857a; }
    .gap { flex: 1; }
    .thumb { height: 269px; border: solid #8e8e90; border-width: 1px 1px 2px 0; background: linear-gradient(90deg, #d8d8da, #c0c0c4); border-radius: 0 3px 3px 0; }
    .foot { height: 18px; }
    .window { display: grid; grid-template-rows: auto auto minmax(0, 1fr) auto; min-width: 0; }
    .main { display: grid; grid-template-columns: 325px minmax(0, 1fr); padding-right: 4px; }
  `];
  render() {
    return html`
      <div class="behind"><div class="sand"></div><div class="gap"></div><div class="thumb"></div><div class="foot"></div></div>
      <div class="window">
        <title-bar></title-bar>
        <ribbon-bar></ribbon-bar>
        <div class="main"><side-panel></side-panel><model-view></model-view></div>
        <status-bar></status-bar>
      </div>`;
  }
}
